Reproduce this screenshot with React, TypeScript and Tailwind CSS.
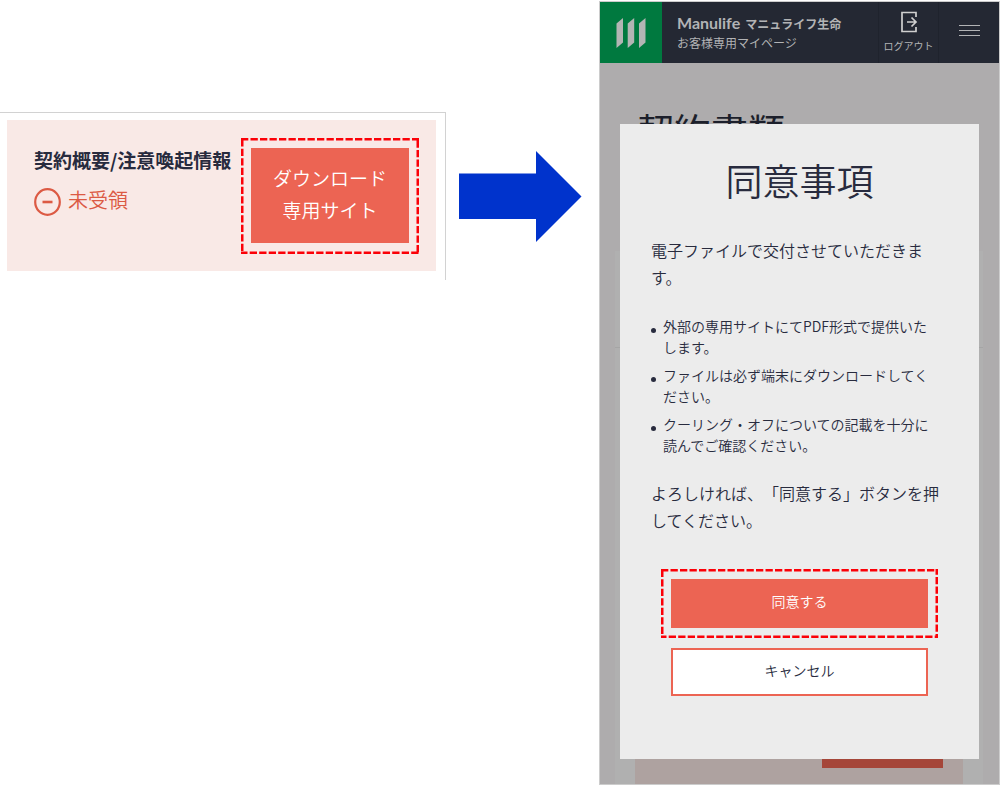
import { useState } from 'react';

const notes = [
  '外部の専用サイトにてPDF形式で提供いたします。',
  'ファイルは必ず端末にダウンロードしてください。',
  'クーリング・オフについての記載を十分に読んでご確認ください。',
];

interface HighlightProps {
  className?: string;
  children: React.ReactNode;
}

// Red dashed frame around the control to press
function Highlight({ className = '', children }: HighlightProps) {
  return (
    <div className={`relative p-[10px] ${className}`}>
      <svg className="absolute inset-0 w-full h-full pointer-events-none" aria-hidden="true">
        <rect width="100%" height="100%" fill="none" stroke="#fb0007" strokeWidth="5" strokeDasharray="7.3 2.2" />
      </svg>
      {children}
    </div>
  );
}

function StatusCard() {
  return (
    <section className="mt-[112px] h-[168px] border-t border-r border-[#d2d2d2] pt-[7px] pl-[7px] pr-[9px]">
      <div className="flex justify-between h-[151px] bg-[#f9e9e6] pl-[27px] pr-[17px] pt-[18px]">
        <div className="pt-2 whitespace-nowrap">
          <h2 className="text-[19px] leading-[28px] font-bold text-[#282b3e]">契約概要/注意喚起情報</h2>
          <div className="flex items-center mt-[10px] text-[#dc5a44]">
            <svg className="w-[27px] h-[28px] mt-1" viewBox="0 0 27 28" fill="none" stroke="currentColor" aria-hidden="true">
              <ellipse cx="13.5" cy="14" rx="12.3" ry="12.8" strokeWidth="2.2" />
              <path d="M8.5 14h10" strokeWidth="2.6" />
            </svg>
            <span className="ml-[7px] text-[20px] leading-[28px] font-[350]">未受領</span>
          </div>
        </div>
        <Highlight className="w-[178px] h-[116px] shrink-0">
          <button type="button" className="w-full h-[95px] bg-[#ec6453] pb-1 text-[19px] leading-[32px] font-[350] text-white whitespace-nowrap">
            ダウンロード<br />専用サイト
          </button>
        </Highlight>
      </div>
    </section>
  );
}

function PhoneHeader() {
  return (
    <header className="flex h-[61px] bg-[#242833] text-[#b2b3b5] whitespace-nowrap">
      <div className="w-[62px] bg-[#00793f] flex items-center justify-center">
        <svg className="w-[30px] h-[32px]" viewBox="0 0 30 32" fill="#b3b5b4" aria-hidden="true">
          <path d="M0.5 6.500 7 1v24.500L0.500 31ZM11.700 6.500l6.500-5.500v24.500L11.700 31ZM23 6.500l6.500-5.500v24.500L23 31Z" />
        </svg>
      </div>
      <div className="flex-1 pl-[15px] pt-[11px]">
        <div className="flex items-baseline gap-[5px] leading-[20px] font-bold">
          <span className="text-[16px] font-['Lato'] font-bold">Manulife</span>
          <span className="text-[12px]">マニュライフ生命</span>
        </div>
        <p className="text-[12px] leading-[18px]">お客様専用マイページ</p>
      </div>
      <button type="button" className="w-[61px] flex flex-col items-center border-x border-[#1f232d] pt-[9px]">
        <svg className="w-[18px] h-[22px]" viewBox="0 0 18 22" fill="none" stroke="#cfcfcf" strokeWidth="1.7" aria-hidden="true">
          <path d="M16 6V1.500H2v19h14V16" />
          <path d="M7 11h9M11.500 6.500 16 11l-4.500 4.500" />
        </svg>
        <span className="mt-[5px] text-[10px] leading-[16px]">ログアウト</span>
      </button>
      <button type="button" aria-label="メニュー" className="w-[60px] flex flex-col items-center gap-1 pt-[23px]">
        <span className="w-[21px] h-px bg-[#b2b3b5]" />
        <span className="w-[21px] h-px bg-[#b2b3b5]" />
        <span className="w-[21px] h-px bg-[#b2b3b5]" />
      </button>
    </header>
  );
}

// The page behind the dialog, already in its dimmed colours
function DimmedPage() {
  return (
    <div className="col-start-1 row-start-1 flex flex-col pl-[15px] pr-4 pt-[39px] bg-[#aeacad]">
      <h1 className="pl-[22px] text-[37px] leading-[56px] text-[#1c1f2b]">契約書類</h1>
      <div className="flex-1 flex flex-col mt-[93px] bg-[#b0b0b0]">
        <div className="h-[97px] border-b border-[#a5a5a5]" />
        <div className="flex-1 flex flex-col items-end justify-end mx-5 bg-[#aea2a0] px-5 pb-4">
          <div className="w-[121px] h-[60px] bg-[#a54639]" />
        </div>
      </div>
    </div>
  );
}

interface DialogProps {
  onClose: () => void;
}

function ConsentDialog({ onClose }: DialogProps) {
  return (
    <div
      role="dialog"
      aria-labelledby="consent-title"
      className="relative col-start-1 row-start-1 mx-5 mt-[61px] mb-[25px] pt-[29px] pb-[63px] bg-[#ececec] font-[350] text-[#282b3e]"
    >
      <h2 id="consent-title" className="text-center text-[37px] leading-[54px] font-[350]">同意事項</h2>
      <div className="pl-[31px] pr-8 text-[16px] leading-[27px]">
        <p className="mt-[30px]">電子ファイルで交付させていただきます。</p>
        <ul className="mt-[25px] pr-2 space-y-[7px] text-[14px] leading-[21px]">
          {notes.map((note) => (
            <li key={note} className="flex gap-[7px]">
              <span className="mt-[12px] w-[5px] h-[5px] shrink-0 rounded-full bg-[#282b3e]" />
              <span>{note}</span>
            </li>
          ))}
        </ul>
        <p className="mt-6">よろしければ、「同意する」ボタンを押してください。</p>
      </div>
      <Highlight className="mt-[35px] mx-[41px]">
        <button type="button" onClick={onClose} className="block w-full h-[49px] bg-[#ec6453] pb-1 text-[14px] text-white">
          同意する
        </button>
      </Highlight>
      <div className="mt-[10px] px-[51px]">
        <button type="button" onClick={onClose} className="block w-full h-12 border-2 border-[#ec6453] bg-white pb-1 text-[14px]">
          キャンセル
        </button>
      </div>
    </div>
  );
}

export default function App() {
  const [open, setOpen] = useState(true);

  return (
    <main lang="ja" className="grid grid-cols-[446fr_153fr_401fr] min-h-screen bg-white font-['Noto_Sans_CJK_JP',sans-serif] [text-spacing-trim:space-all]">
      <StatusCard />
      <div className="pt-[151px] pl-[13px]">
        <svg className="w-[123px] h-[91px]" viewBox="0 0 123 91" fill="#0033cc" aria-hidden="true">
          <path d="M0 22.500h77V0l45.500 45.500L77 91V68H0Z" />
        </svg>
      </div>
      <div className="flex flex-col mt-px border border-[#cccccc]">
        <PhoneHeader />
        <div className="flex-1 grid grid-cols-1">
          <DimmedPage />
          {open && <ConsentDialog onClose={() => setOpen(false)} />}
        </div>
      </div>
    </main>
  );
}
